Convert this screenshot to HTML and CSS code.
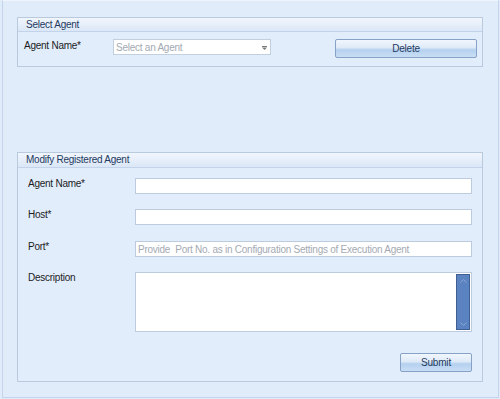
FILE: index.html
```html
<!DOCTYPE html>
<html lang="en">
<head>
  <meta charset="UTF-8" />
  <meta name="viewport" content="width=device-width, initial-scale=1.0" />
  <title>Agents</title>
  <link rel="stylesheet" href="styles.css">
</head>
<body>
  <div class="window">
    <!-- choose an agent to remove -->
    <section class="group group-select">
      <div class="group-title">Select Agent</div>
      <div class="group-body select-row">
        <span class="label">Agent Name*</span>
        <div class="combo">
          <span class="combo-text">Select an Agent</span>
          <svg class="combo-arrow" width="5" height="4" viewBox="0 0 5 4">
            <rect x="0" y="0" width="5" height="1" fill="#7a7a7a" />
            <path d="M0 1.5 H5 L2.5 4 Z" fill="#7a7a7a" />
          </svg>
        </div>
        <button class="btn btn-delete">Delete</button>
      </div>
    </section>

    <!-- edit the details of a registered agent -->
    <section class="group group-modify">
      <div class="group-title">Modify Registered Agent</div>
      <div class="group-body form">
        <div class="field">
          <span class="label">Agent Name*</span>
          <input class="text" type="text" />
        </div>
        <div class="field">
          <span class="label">Host*</span>
          <input class="text" type="text" />
        </div>
        <div class="field field-port">
          <span class="label">Port*</span>
          <input class="text" type="text" placeholder="Provide  Port No. as in Configuration Settings of Execution Agent" />
        </div>
        <div class="field">
          <span class="label">Description</span>
          <div class="memo">
            <div class="scrollbar">
              <svg width="7" height="4" viewBox="0 0 7 4"><path d="M0.5 3.5 L3.5 0.5 L6.5 3.5" fill="none" stroke="#8aa6d4" /></svg>
              <svg width="7" height="4" viewBox="0 0 7 4"><path d="M0.5 0.5 L3.5 3.5 L6.5 0.5" fill="none" stroke="#8aa6d4" /></svg>
            </div>
          </div>
        </div>
        <div class="actions">
          <button class="btn btn-submit">Submit</button>
        </div>
      </div>
    </section>
  </div>
</body>
</html>
```

FILE: styles.css
```css
body {
  margin: 0;
  padding: 0;
  background-color: #e1ecfa;
  font-family: "Liberation Sans", Arial, sans-serif;
  font-size: 10px;
  letter-spacing: -0.25px;
  color: #1b1b1b;
}
/* outer form frame */
.window {
  box-sizing: border-box;
  width: 497px;
  height: 398px;
  margin-left: 2px;
  padding: 16px 15px 0 14px;
  border: 1px solid #c4d4ea;
  border-top-color: #eef4fc;
  background-color: #e1ecfa;
  display: flex;
  flex-direction: column;
}
.group {
  box-sizing: border-box;
  border: 1px solid #b9cadf;
  background-color: #e2edfb;
  display: flex;
  flex-direction: column;
}
.group-select {
  height: 50px;
}
.group-modify {
  height: 230px;
  margin-top: 85px;
}
.group-title {
  height: 13px;
  line-height: 13px;
  padding-left: 8px;
  color: #1e3a60;
  border-bottom: 1px solid #c3d4ea;
  background: linear-gradient(#f1f6fd, #dbe7f7);
}
.group-modify .group-title {
  height: 14px;
  line-height: 14px;
}
.label {
  display: block;
  line-height: 13px;
}
/* top row */
.select-row {
  display: flex;
  align-items: flex-start;
  padding: 7px 5px 0 6px;
}
.select-row .label {
  width: 89px;
  flex: none;
}
.combo {
  box-sizing: border-box;
  width: 158px;
  height: 16px;
  border: 1px solid #c2cfdf;
  background: #fff;
  display: flex;
  align-items: center;
  justify-content: space-between;
  padding: 0 3px 0 2px;
}
.combo-text {
  color: #a3a9b2;
}
.combo-arrow {
  margin-top: 1px;
}
.btn {
  box-sizing: border-box;
  height: 19px;
  border: 1px solid #86a2c6;
  border-radius: 2px;
  font-family: inherit;
  font-size: 10px;
  letter-spacing: -0.2px;
  color: #1e3a60;
  padding: 0;
  background: linear-gradient(#f1f6fd 0%, #dfeaf7 45%, #b4d0ef 58%, #c9def5 100%);
  cursor: pointer;
}
.btn-delete {
  width: 142px;
  margin-left: 64px;
}
/* modify form */
.form {
  display: flex;
  flex-direction: column;
  padding: 10px 10px 0 10px;
}
.field {
  display: flex;
  align-items: flex-start;
  margin-bottom: 15px;
}
.field-port {
  margin-top: 1px;
}
.field .label {
  width: 107px;
  flex: none;
  margin-top: -1px;
}
.text {
  box-sizing: border-box;
  width: 337px;
  height: 16px;
  border: 1px solid #bccbdd;
  background: #fff;
  margin: 0;
  padding: 0 2px;
  font-family: inherit;
  font-size: 10px;
  letter-spacing: -0.25px;
  outline: none;
}
.text::placeholder {
  color: #a4aab3;
}
.memo {
  box-sizing: border-box;
  width: 337px;
  height: 60px;
  border: 1px solid #bccbdd;
  background: #fff;
  display: flex;
  justify-content: flex-end;
  padding: 1px;
}
.scrollbar {
  box-sizing: border-box;
  width: 14px;
  height: 100%;
  background: #5b82c1;
  border: 1px solid #3f5f93;
  display: flex;
  flex-direction: column;
  justify-content: space-between;
  align-items: center;
  padding: 4px 0 3px;
}
.actions {
  display: flex;
  justify-content: flex-end;
  margin-top: 6px;
}
.btn-submit {
  width: 72px;
}
```
